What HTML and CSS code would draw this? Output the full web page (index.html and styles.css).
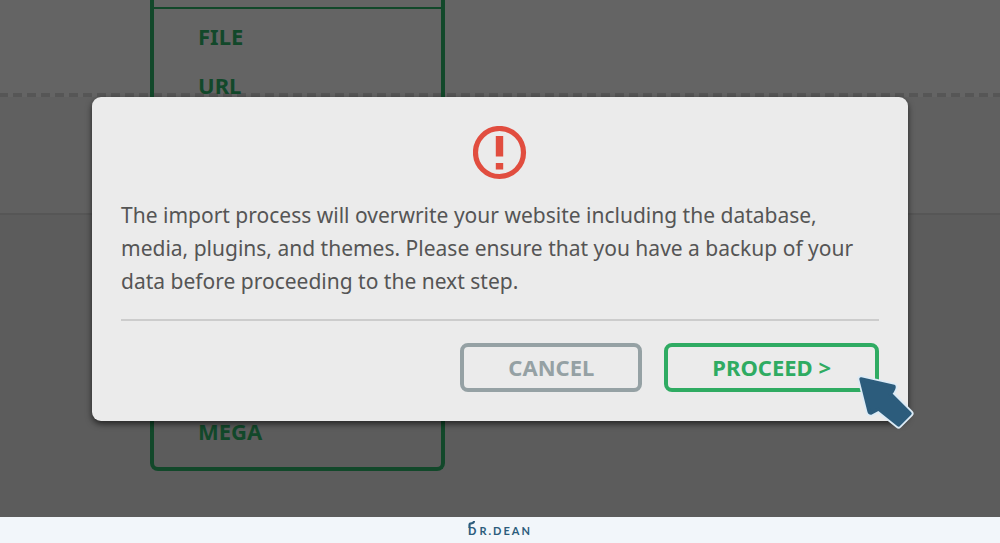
FILE: index.html
```
<!DOCTYPE html>
<html lang="en">
<head>
  <meta charset="UTF-8">
  <meta name="viewport" content="width=device-width, initial-scale=1.0">
  <title>Import</title>
  <link rel="stylesheet" href="styles.css">
</head>
<body>

  <main class="stage">
    <!-- dimmed import page -->
    <div class="drop-area"></div>
    <div class="drop-area-below"></div>
    <div class="page-rest"></div>

    <nav class="import-menu">
      <div class="import-menu-head"></div>
      <ul class="import-menu-list">
        <li><a href="#file">FILE</a></li>
        <li><a href="#url">URL</a></li>
        <li class="last"><a href="#mega">MEGA</a></li>
      </ul>
    </nav>

    <div class="overlay">
      <section class="modal" role="alertdialog" aria-describedby="message">
        <svg class="warning" viewBox="0 0 54 54" aria-hidden="true">
          <circle cx="26.500" cy="26.500" r="24" fill="none" stroke="#e14d3f" stroke-width="5.200"/>
          <path d="M22.800 10h7.400v20.500h-7.400zM22.800 37h7.400v6.500h-7.400z" fill="#e14d3f"/>
        </svg>
        <p class="message" id="message">The import process will overwrite your website including the database, media, plugins, and themes. Please ensure that you have a backup of your data before proceeding to the next step.</p>
        <div class="actions">
          <button type="button" class="btn btn-cancel">CANCEL</button>
          <button type="button" class="btn btn-proceed">PROCEED &gt;</button>
          <svg class="cursor" viewBox="0 0 60 59" aria-hidden="true">
            <path d="M6 6L39 13.500Q40 15 36 21L55 40.500L43.500 52L23.500 36L16 40Q14.500 40 14 38Z" fill="#dcebf6" stroke="#dcebf6" stroke-width="7" stroke-linejoin="round"/>
            <path d="M6 6L39 13.500Q40 15 35.500 21L55 40.500L43.500 52L23.500 36L16 40Q14.500 40 14 38Z" fill="#2c5c7c" stroke="#2c5c7c" stroke-width="3.400" stroke-linejoin="round"/>
          </svg>
        </div>
      </section>
    </div>
  </main>

  <footer class="footer">
    <div class="logo">
      <span class="logo-d">D<svg class="logo-hair" viewBox="0 0 8 8" aria-hidden="true">
        <path d="M1.500 8V5Q1.500 3.200 3.500 3.300Q5.800 3.300 6 1" fill="none" stroke="#2c5c7c" stroke-width="2.200"/>
      </svg></span>
      <span class="logo-name">R.DEAN</span>
    </div>
  </footer>

</body>
</html>
```
FILE: styles.css
```
* { box-sizing: border-box; }

body {
  margin: 0;
  min-height: 100vh;
  display: flex;
  flex-direction: column;
  font-family: "Noto Sans", "Open Sans", sans-serif;
  background-color: #5c5c5c;
}

.stage {
  position: relative;
  flex: 1;
  display: flex;
  flex-direction: column;
  overflow: hidden;
}

.drop-area {
  height: 97px;
  background-color: #646464;
  /* dashed edge of the drop area */
  background-image: repeating-linear-gradient(90deg, #565656 0, #565656 8px, transparent 8px, transparent 13px, #565656 13px, #565656 14px);
  background-size: 100% 4px;
  background-position: 0 93px;
  background-repeat: no-repeat;
}

.drop-area-below {
  height: 118px;
  background-color: #606060;
  border-bottom: 2px solid #565656;
}

.page-rest {
  flex: 1;
  background-color: #5c5c5c;
}

.import-menu {
  position: absolute;
  top: 0;
  left: 150px;
  width: 295px;
  height: 471px;
  display: flex;
  flex-direction: column;
  border: 4px solid #12482a;
  border-top: 0;
  border-radius: 0 0 8px 8px;
}

.import-menu-head {
  height: 9px;
  border-bottom: 2px solid #12482a;
}

.import-menu-list {
  flex: 1;
  display: flex;
  flex-direction: column;
  margin: 0;
  padding: 3px 44px 11px;
  list-style: none;
}

.import-menu-list .last { margin-top: auto; }

.import-menu-list a {
  display: block;
  font-size: 22px;
  line-height: 49px;
  font-weight: bold;
  color: #12482a;
  text-decoration: none;
}

.overlay {
  position: absolute;
  inset: 0;
  display: flex;
  align-items: center;
  justify-content: center;
  padding: 0 92px;
}

.modal {
  flex: 1;
  max-width: 900px;
  padding: 29px;
  display: flex;
  flex-direction: column;
  background-color: #ebebeb;
  border-radius: 9px;
  box-shadow: 0 3px 6px rgba(0, 0, 0, 0.6);
}

.warning {
  width: 54px;
  height: 54px;
  align-self: center;
}

.message {
  margin: 19px 0 21px;
  font-size: 21px;
  line-height: 33px;
  color: #555;
}

.actions {
  position: relative;
  display: flex;
  justify-content: flex-end;
  gap: 22px;
  padding-top: 22px;
  border-top: 2px solid #cccccc;
}

.btn {
  height: 49px;
  padding: 0 44px;
  border: 4px solid;
  border-radius: 8px;
  background: none;
  font-family: inherit;
  font-size: 22px;
  font-weight: bold;
  line-height: 33px;
  cursor: pointer;
}

.btn-cancel { color: #95a1a4; }
.btn-proceed { color: #2fab62; }

.cursor {
  position: absolute;
  right: -36px;
  bottom: -40px;
  width: 60px;
  height: 59px;
}

.footer {
  height: 26px;
  display: flex;
  align-items: center;
  justify-content: center;
  background-color: #f2f6fa;
}

.logo {
  display: flex;
  gap: 3px;
  padding-top: 2px;
  font-family: Lato, sans-serif;
  font-size: 11px;
  line-height: 14px;
  font-weight: bold;
  color: #2c5c7c;
}

.logo-d {
  position: relative;
  font-weight: 900;
}

.logo-hair {
  position: absolute;
  left: 0;
  top: -4px;
  width: 8px;
  height: 8px;
}

.logo-name { letter-spacing: 2px; }
```
